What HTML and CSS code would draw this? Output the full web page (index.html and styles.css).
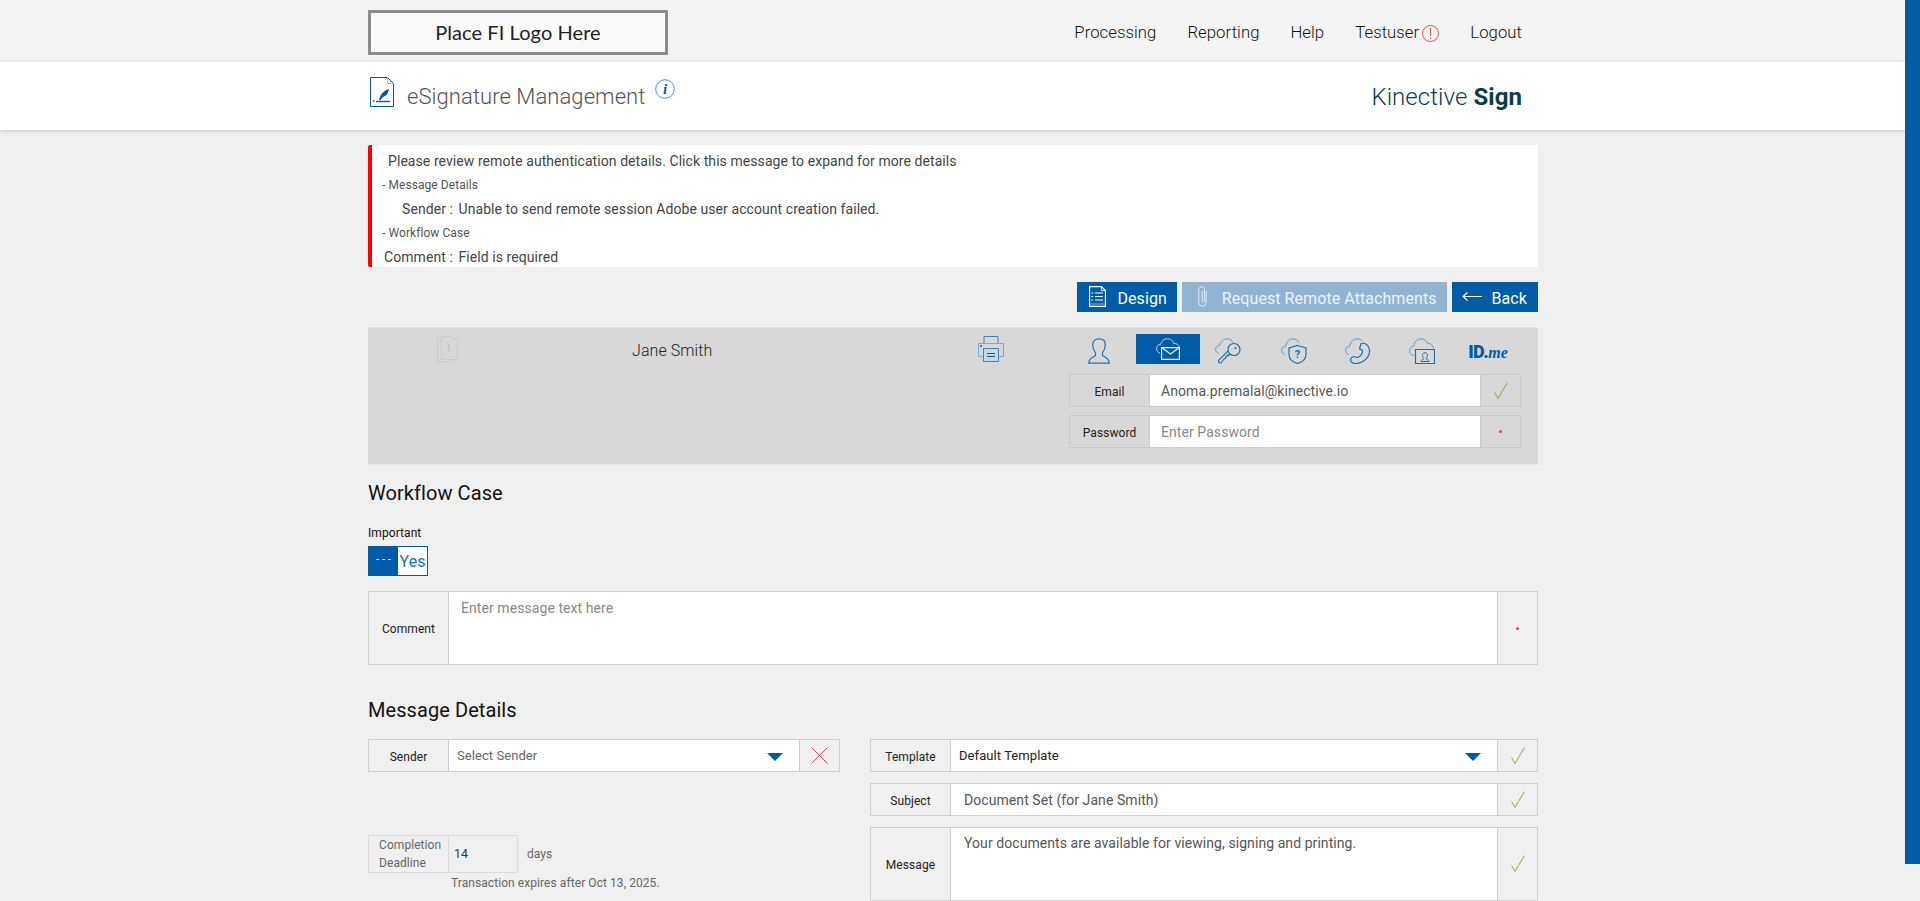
FILE: index.html
```html
<!DOCTYPE html>
<html lang="en">
<head>
    <meta charset="UTF-8">
    <meta name="viewport" content="width=device-width, initial-scale=1.0">
    <title>eSignature Management</title>
    <link rel="stylesheet" href="styles.css">
</head>
<body>
    <div class="page">
        <header class="topbar">
            <div class="container topbar-inner">
                <div class="logo-box">Place FI Logo Here</div>
                <nav class="topnav">
                    <a href="#">Processing</a>
                    <a href="#">Reporting</a>
                    <a href="#">Help</a>
                    <a href="#" class="user-link">Testuser
                        <svg class="alert-icon" viewBox="0 0 17 17"><circle cx="8.500" cy="8.500" r="8" fill="none" stroke="#e8262c" stroke-width=".8"/><path d="M8.500 3v8M8.500 12.500V14" stroke="#e8262c" stroke-width=".8" fill="none"/></svg>
                    </a>
                    <a href="#">Logout</a>
                </nav>
            </div>
        </header>

        <div class="titlebar">
            <div class="container titlebar-inner">
                <div class="title-left">
                    <svg class="title-icon" viewBox="0 0 24 30"><path d="M.5.5h17l6 6v23H.5z" fill="#fff" stroke="#005ca6"/><path d="M17.500.5v6h6" fill="none" stroke="#a9c8e2"/><path d="M6 24.500h14" stroke="#005ca6" stroke-width="1.400"/><path d="M3 24h1.500" stroke="#005ca6" stroke-width="1.400"/><path d="M9 23c1-5 4-9 10-11-1 4-2 6-4 7l-2 1-2.500 3z" fill="#005ca6"/></svg>
                    <h1>eSignature Management</h1>
                    <svg class="info-icon" viewBox="0 0 20 20"><circle cx="10" cy="10" r="9.300" fill="#fff" stroke="#4a92c8"/><text x="10" y="15" text-anchor="middle" class="info-i">i</text></svg>
                </div>
                <div class="brand">Kinective <b>Sign</b></div>
            </div>
        </div>

        <main class="container">
            <section class="alert">
                <p class="alert-head">Please review remote authentication details. Click this message to expand for more details</p>
                <p class="alert-group">- Message Details</p>
                <p class="alert-line alert-line-sender"><span>Sender :</span> Unable to send remote session Adobe user account creation failed.</p>
                <p class="alert-group">- Workflow Case</p>
                <p class="alert-line"><span>Comment :</span> Field is required</p>
            </section>

            <div class="actions">
                <a href="#" class="btn btn-design">
                    <svg class="btn-icon" viewBox="0 0 17 21"><path d="M.6.6h11.800l4 4v15.800H.6z" fill="none" stroke="#fff" stroke-width="1.100"/><path d="M12.400.6v4h4" fill="none" stroke="#fff" stroke-width=".8"/><path d="M6 7h8M6 10.500h8M6 14h8M2.500 7h1.600M2.500 10.500h1.600M2.500 14h1.600" stroke="#fff" stroke-width="1.200"/><path d="M1 18h15" stroke="#7fb2da"/></svg>
                    Design
                </a>
                <a href="#" class="btn btn-disabled">
                    <svg class="btn-icon clip-icon" viewBox="0 0 9 21"><path d="M8.200 5v11.500a3.700 3.700 0 0 1-7.400 0V3.500a2.800 2.800 0 0 1 5.600 0V15a1.100 1.100 0 0 1-2.200 0V5" fill="none" stroke="#e4edf5"/></svg>
                    Request Remote Attachments
                </a>
                <a href="#" class="btn btn-back">
                    <svg class="btn-icon back-icon" viewBox="0 0 20 9"><path d="M20 4.500H1M5.500.5 1 4.500l4.500 4" fill="none" stroke="#fff" stroke-width="1.100"/></svg>
                    Back
                </a>
            </div>

            <section class="signer">
                <svg class="doc-icon" viewBox="0 0 21 26"><path d="M4.500.5h11l5 5v18h-16z" fill="none" stroke="#cacaca"/><path d="M4.500 3H.5v22.500h16v-2" fill="none" stroke="#cacaca"/><text x="11.500" y="15" text-anchor="middle" class="doc-num">1</text></svg>
                <div class="signer-name">Jane Smith</div>
                <svg class="print-icon" viewBox="0 0 26 26"><path d="M6 7.500V.5h14v7" fill="none" stroke="#3d83bd"/><path d="M5 20.500H.5v-13h25v13H21" fill="#d8d8d8" stroke="#7fa9cc"/><path d="M5.500 12.500h15v13h-15z" fill="#c6d6e3" stroke="#3d83bd"/><path d="M9 17.500h8M9 20.500h8" stroke="#005ca6" stroke-width="1.200"/><path d="M2 10h2" stroke="#005ca6" stroke-width="1.500"/></svg>

                <div class="auth">
                    <div class="auth-tabs">
                        <span class="auth-tab auth-tab-user">
                            <svg viewBox="0 0 22 26"><path d="M7.500 15c-2-2.500-2.800-5-2.800-8.500C4.700 3 7.300.8 11 .8s6.300 2.200 6.300 5.700c0 3.500-.8 6-2.800 8.500v2.500c2 1.500 6.700 2.500 6.800 7.700H.7c.1-5.200 4.800-6.200 6.800-7.700z" fill="none" stroke="#1f6fb0" stroke-width="1.200"/></svg>
                        </span>
                        <span class="auth-tab auth-tab-active">
                            <svg viewBox="0 0 24 22"><path d="M4 15C2 14.500.6 13 .6 10.500c0-2.500 2-4.300 4-4C5.500 3 8 .7 11.500.7c3 0 5.500 2 6.300 4.800 2.700-.2 4.700 1 5.500 3.500" fill="none" stroke="#bcd4e8"/><path d="M5.600 9.600h17.800v11.800H5.600z" fill="#005ca6" stroke="#e6f0f8" stroke-width="1.200"/><path d="m5.600 9.600 8.900 6.400 8.900-6.400" fill="none" stroke="#e6f0f8" stroke-width="1.200"/></svg>
                        </span>
                        <span class="auth-tab auth-tab-key">
                            <svg viewBox="0 0 26 26"><path d="M4 15.500C2 15 .6 13.500.6 11.500c0-2.500 2-4.300 4-4C5.500 3.500 8.500.8 12 .8c2.800 0 5 1.500 6 4" fill="none" stroke="#5f9aca"/><circle cx="19" cy="11.500" r="6" fill="#d8d8d8" stroke="#1f6fb0" stroke-width="1.200"/><circle cx="20.500" cy="10" r="1.100" fill="#1f6fb0"/><path d="M15 16l-1.500 1.500-1-.5-.5 1.500-1.500.5v1.500l-1.500.5L6 25H4.500l-1-1v-1.500L13 13" fill="none" stroke="#1f6fb0" stroke-width="1.100"/></svg>
                        </span>
                        <span class="auth-tab auth-tab-cloud">
                            <svg viewBox="0 0 26 26"><path d="M4 16.500C2 16 .6 14.500.6 12.500c0-2.500 2-4.300 4-4C5.500 3.500 8.500.8 12 .8c2.500 0 5 1.500 6 4" fill="none" stroke="#5f9aca"/><path d="M16.500 7.500l8.500 2.500v6.500c0 4-3.500 7.500-8.500 9-5-1.500-8.500-5-8.500-9V10z" fill="#d8d8d8" stroke="#1f6fb0" stroke-width="1.200"/><text x="16.500" y="20" text-anchor="middle" class="shield-q">?</text></svg>
                        </span>
                        <span class="auth-tab auth-tab-cloud">
                            <svg viewBox="0 0 26 26"><path d="M4 16.500C2 16 .6 14.500.6 12.500c0-2.500 2-4.300 4-4C5.500 3.500 8.500.8 12 .8c2.500 0 5 1 6 3" fill="none" stroke="#5f9aca"/><path d="M16 5.500c4-1 8 1.500 8.500 6.500.5 6.500-5.500 13.500-14 13.500-2.500 0-5-1.500-5-3.500 0-1.500 2-3.500 3.500-3.500s2 1.500 3.500 1c3-1 5.500-4.500 5-7-.5-1-2-1-3-1.500z" fill="#d8d8d8" stroke="#1f6fb0" stroke-width="1.200"/></svg>
                        </span>
                        <span class="auth-tab auth-tab-cloud">
                            <svg viewBox="0 0 26 26"><path d="M5 17.500C2 17.500.6 15 .6 12.500c0-2.500 2-4.300 4-4.300C5 4 8.500.8 12 .8c3 0 5.500 1.700 6.500 4.500 2.500-.5 5.500 1.500 6 5.200" fill="none" stroke="#5f9aca"/><path d="M6.500 11.500h19v14h-19z" fill="#d8d8d8" stroke="#1f6fb0" stroke-width="1.200"/><path d="M12 23.500c0-2 2.500-2 3-3-1-1-1.500-2-1.500-3.200 0-1.500 1-2.500 2.500-2.500s2.500 1 2.500 2.500c0 1.200-.5 2.200-1.500 3.200.5 1 3 1 3 3z" fill="none" stroke="#1f6fb0"/></svg>
                        </span>
                        <span class="auth-tab idme"><b>ID.</b><i>me</i></span>
                    </div>
                    <div class="field auth-field">
                        <label class="field-label">Email</label>
                        <div class="field-value">Anoma.premalal@kinective.io</div>
                        <div class="field-status">
                            <svg class="check" viewBox="0 0 14 18"><path d="M.6 10.500 4 16.500 13.400.6" fill="none" stroke="#7eae4e"/></svg>
                        </div>
                    </div>
                    <div class="field auth-field">
                        <label class="field-label">Password</label>
                        <div class="field-value field-placeholder">Enter Password</div>
                        <div class="field-status"><span class="req-dot"></span></div>
                    </div>
                </div>
            </section>

            <h2 class="section-title">Workflow Case</h2>
            <div class="small-label">Important</div>
            <div class="toggle">
                <span class="toggle-on">- - -</span>
                <span class="toggle-off">Yes</span>
            </div>
            <div class="field comment-field">
                <label class="field-label">Comment</label>
                <div class="field-value field-placeholder field-top">Enter message text here</div>
                <div class="field-status"><span class="req-dot"></span></div>
            </div>

            <h2 class="section-title section-title-msg">Message Details</h2>
            <div class="details">
                <div class="details-left">
                    <div class="field row-field">
                        <label class="field-label">Sender</label>
                        <div class="field-value field-select select-muted">Select Sender <span class="caret"></span></div>
                        <div class="field-status">
                            <svg class="cross" viewBox="0 0 17 17"><path d="m.5.5 16 16M16.500.5l-16 16" fill="none" stroke="#e2485c"/></svg>
                        </div>
                    </div>
                    <div class="deadline">
                        <div class="deadline-box">
                            <div class="deadline-label">Completion Deadline</div>
                            <div class="deadline-num">14</div>
                        </div>
                        <span class="deadline-unit">days</span>
                    </div>
                    <div class="deadline-note">Transaction expires after Oct 13, 2025.</div>
                </div>
                <div class="details-right">
                    <div class="field row-field">
                        <label class="field-label">Template</label>
                        <div class="field-value field-select select-dark">Default Template <span class="caret"></span></div>
                        <div class="field-status">
                            <svg class="check" viewBox="0 0 14 18"><path d="M.6 10.500 4 16.500 13.400.6" fill="none" stroke="#7eae4e"/></svg>
                        </div>
                    </div>
                    <div class="field row-field">
                        <label class="field-label">Subject</label>
                        <div class="field-value">Document Set (for Jane Smith)</div>
                        <div class="field-status">
                            <svg class="check" viewBox="0 0 14 18"><path d="M.6 10.500 4 16.500 13.400.6" fill="none" stroke="#7eae4e"/></svg>
                        </div>
                    </div>
                    <div class="field message-field">
                        <label class="field-label">Message</label>
                        <div class="field-value field-top">Your documents are available for viewing, signing and printing.</div>
                        <div class="field-status">
                            <svg class="check" viewBox="0 0 14 18"><path d="M.6 10.500 4 16.500 13.400.6" fill="none" stroke="#7eae4e"/></svg>
                        </div>
                    </div>
                </div>
            </div>
        </main>
    </div>
    <div class="scroll-thumb"></div>
</body>
</html>
```

FILE: styles.css
```css
:root {
    --blue: #005ca6;
    --page-bg: #f0f0f0;
    --line: #cfcfcf;
    --text: #444;
}
html, body {
    margin: 0;
    height: 901px;
    overflow: hidden;
}
body {
    font-family: Roboto, sans-serif;
    font-size: 14px;
    letter-spacing: 0.07px;
    color: var(--text);
    background-color: var(--page-bg);
}
.page {
    width: 1906px;
}
.container {
    width: 1170px;
    margin: 0 auto;
    box-sizing: border-box;
}
.scroll-thumb {
    position: absolute;
    top: 0;
    right: 0;
    width: 15px;
    height: 864px;
    background: var(--blue);
}

/* top bar */
.topbar {
    background: #f4f4f4;
    height: 62px;
}
.topbar-inner {
    height: 62px;
    display: flex;
    justify-content: space-between;
    align-items: flex-start;
}
.logo-box {
    width: 300px;
    height: 45px;
    margin-top: 10px;
    box-sizing: border-box;
    border: 3px solid #8c8c8c;
    background: #fafafa;
    color: #222;
    font-family: Lato, sans-serif;
    font-size: 20px;
    text-align: center;
    line-height: 39px;
}
.topnav {
    display: flex;
    gap: 31px;
    padding: 23px 16px 0 0;
    font-size: 16.7px;
    font-weight: 300;
    line-height: 20px;
}
.topnav a {
    color: #111;
    text-decoration: none;
}
.user-link {
    display: flex;
    gap: 3px;
    align-items: center;
}
.alert-icon {
    width: 17px;
    height: 17px;
}

/* title bar */
.titlebar {
    background: #fff;
    height: 68px;
    box-shadow: 0 1px 4px rgba(0,0,0,0.18);
    position: relative;
}
.titlebar-inner {
    display: flex;
    justify-content: space-between;
}
.title-left {
    display: flex;
    align-items: flex-start;
}
.title-icon {
    width: 24px;
    height: 30px;
    margin: 15px 0 0 2px;
}
.title-left h1 {
    margin: 21px 0 0 13px;
    font-size: 22px;
    font-weight: 300;
    line-height: 28px;
    color: #555;
}
.info-icon {
    width: 20px;
    height: 20px;
    margin: 17px 0 0 10px;
}
.info-i {
    font-family: "Liberation Serif", serif;
    font-size: 15px;
    font-weight: 700;
    font-style: italic;
    fill: var(--blue);
}
.brand {
    margin: 20px 16px 0 0;
    font-size: 24px;
    font-weight: 300;
    line-height: 30px;
    color: #0d3c46;
}
.brand b {
    font-weight: 700;
}

/* alert */
.alert {
    margin-top: 15px;
    height: 122px;
    box-sizing: border-box;
    background: #fff;
    border-left: 4px solid #f00;
    border-radius: 2px 0 0 2px;
    padding-top: 4px;
}
.alert p {
    margin: 0;
}
.alert-head {
    padding-left: 16px;
    line-height: 24px;
}
.alert-group {
    padding-left: 10px;
    font-size: 12px;
    line-height: 24px;
    color: #555;
}
.alert-line {
    padding-left: 12px;
    line-height: 24px;
}
.alert-line span {
    margin-right: 2px;
}
.alert-line-sender {
    padding-left: 30px;
}

/* action buttons */
.actions {
    display: flex;
    justify-content: flex-end;
    gap: 5px;
    margin-top: 15px;
}
.btn {
    display: flex;
    align-items: center;
    height: 30px;
    box-sizing: border-box;
    padding-top: 3px;
    background: var(--blue);
    color: #fff;
    font-size: 16px;
    text-decoration: none;
}
.btn-design {
    padding-left: 12px;
    padding-right: 10px;
}
.btn-disabled {
    background: #90b4d2;
    color: #eef3f8;
    padding-left: 16px;
    padding-right: 10px;
}
.btn-back {
    padding-left: 10px;
    padding-right: 11px;
}
.btn-icon {
    width: 17px;
    height: 21px;
    margin-right: 11px;
    margin-top: -4px;
}
.clip-icon {
    width: 9px;
    margin-right: 15px;
}
.back-icon {
    width: 20px;
    height: 9px;
    margin-right: 10px;
}

/* signer panel */
.signer {
    margin-top: 15px;
    height: 138px;
    background: #d8d8d8;
    border-top: 1px solid #e2e2e2;
    border-bottom: 1px solid #e6e6e6;
    box-sizing: border-box;
    display: flex;
    align-items: flex-start;
}
.doc-icon {
    width: 21px;
    height: 26px;
    margin: 8px 0 0 69px;
}
.doc-num {
    font-family: Roboto, sans-serif;
    font-size: 9px;
    font-weight: 700;
    fill: #c4c4c4;
}
.signer-name {
    width: 0;
    white-space: nowrap;
    margin: 13px 0 0 174px;
    font-size: 16px;
    font-weight: 300;
    line-height: 20px;
    color: #222;
}
.print-icon {
    width: 26px;
    height: 26px;
    margin: 8px 0 0 346px;
}
.auth {
    margin-left: 65px;
    width: 469px;
}
.auth-tabs {
    display: flex;
    height: 30px;
    margin-top: 6px;
    margin-left: 3px;
}
.auth-tab {
    width: 64px;
    height: 30px;
    display: flex;
    align-items: center;
    justify-content: center;
}
.auth-tab svg {
    width: 26px;
    height: 26px;
    margin-top: 4px;
}
.auth-tab-user svg {
    width: 22px;
    margin-right: 10px;
}
.auth-tab-active svg {
    width: 24px;
    height: 22px;
    margin-top: 0;
}
.auth-tab-key svg {
    margin-right: 8px;
}
.auth-tab-cloud svg {
    margin-right: 5px;
}
.auth-tab-active {
    background: var(--blue);
}
.shield-q {
    font-family: Roboto, sans-serif;
    font-size: 11px;
    font-weight: 700;
    fill: #1f6fb0;
}
.idme {
    color: var(--blue);
    font-size: 18px;
    align-items: baseline;
    line-height: 36px;
}
.idme b {
    font-weight: 900;
    letter-spacing: -0.5px;
}
.idme i {
    font-family: "Liberation Serif", serif;
    font-weight: 700;
    font-size: 16px;
}

/* form fields */
.field {
    display: flex;
    border: 1px solid var(--line);
    box-sizing: border-box;
}
.field-label {
    flex: none;
    width: 80px;
    box-sizing: border-box;
    padding-top: 2px;
    display: flex;
    align-items: center;
    justify-content: center;
    font-size: 12px;
    color: #222;
    background: #f0f0f0;
    border-right: 1px solid var(--line);
}
.field-value {
    flex: 1;
    background: #fff;
    padding: 0 0 0 9px;
    display: flex;
    align-items: center;
    font-size: 14px;
    color: #555;
}
.field-top {
    align-items: flex-start;
    padding-top: 7px;
}
.field-placeholder {
    color: #888;
}
.field-status {
    flex: none;
    width: 40px;
    box-sizing: border-box;
    display: flex;
    align-items: center;
    justify-content: center;
    background: #f0f0f0;
    border-left: 1px solid var(--line);
}
.req-dot {
    width: 3px;
    height: 3px;
    border-radius: 50%;
    background: #e2485c;
}
.check {
    width: 14px;
    height: 18px;
}
.cross {
    width: 17px;
    height: 17px;
}
.auth-field {
    height: 33px;
    margin: 0 17px 0 0;
    border-color: #cbcbcb;
}
.auth-tabs + .auth-field {
    margin-top: 10px;
}
.auth-field + .auth-field {
    margin-top: 8px;
}
.auth-field .field-label,
.auth-field .field-status {
    background: #d8d8d8;
    border-color: #cbcbcb;
}
.auth-field .field-value {
    padding-left: 11px;
}
.auth-field .field-placeholder {
    color: #888;
}

/* workflow */
.section-title {
    margin: 16px 0 0;
    font-size: 20px;
    font-weight: 400;
    line-height: 24px;
    color: #111;
}
.small-label {
    margin-top: 20px;
    font-size: 12px;
    line-height: 16px;
    color: #111;
}
.toggle {
    display: flex;
    width: 60px;
    height: 30px;
    margin-top: 5px;
    box-sizing: border-box;
    border: 1px solid var(--blue);
    background: #fff;
}
.toggle-on {
    width: 29px;
    background: var(--blue);
    color: #fff;
    font-size: 11px;
    line-height: 26px;
    text-align: center;
}
.toggle-off {
    flex: 1;
    color: #1e6fae;
    font-size: 16px;
    line-height: 30px;
    text-align: center;
}
.comment-field {
    margin-top: 15px;
    height: 74px;
}
.comment-field .field-value {
    padding-left: 12px;
    padding-top: 8px;
}
.section-title-msg {
    margin-top: 33px;
}

/* message details */
.details {
    display: flex;
    justify-content: space-between;
    margin-top: 17px;
}
.details-left {
    width: 472px;
}
.details-right {
    width: 668px;
    display: flex;
    flex-direction: column;
    gap: 11px;
}
.row-field {
    height: 33px;
}
.field-select {
    justify-content: space-between;
    font-size: 13px;
    padding-left: 8px;
    padding-right: 16px;
    padding-bottom: 1px;
}
.select-muted {
    color: #666;
}
.select-dark {
    color: #222;
}
.caret {
    width: 0;
    height: 0;
    border-left: 8px solid transparent;
    border-right: 8px solid transparent;
    border-top: 8px solid var(--blue);
    margin-top: 3px;
}
.message-field {
    height: 74px;
}
.details-right .field-value {
    padding-left: 13px;
}
.details-right .field-select {
    padding-left: 8px;
}
.deadline {
    display: flex;
    align-items: center;
    margin-top: 63px;
}
.deadline-box {
    display: flex;
    width: 150px;
    height: 38px;
    box-sizing: border-box;
    border: 1px solid #dcdcdc;
}
.deadline-label {
    width: 80px;
    flex: none;
    box-sizing: border-box;
    padding-left: 10px;
    border-right: 1px solid #dcdcdc;
    font-size: 12px;
    line-height: 18px;
    color: #666;
}
.deadline-num {
    padding-left: 5px;
    font-size: 12.5px;
    line-height: 36px;
    color: #333;
}
.deadline-unit {
    margin-left: 9px;
    font-size: 12px;
    color: #666;
}
.deadline-note {
    margin: 2px 0 0 83px;
    font-size: 12px;
    line-height: 16px;
    color: #666;
}
```
